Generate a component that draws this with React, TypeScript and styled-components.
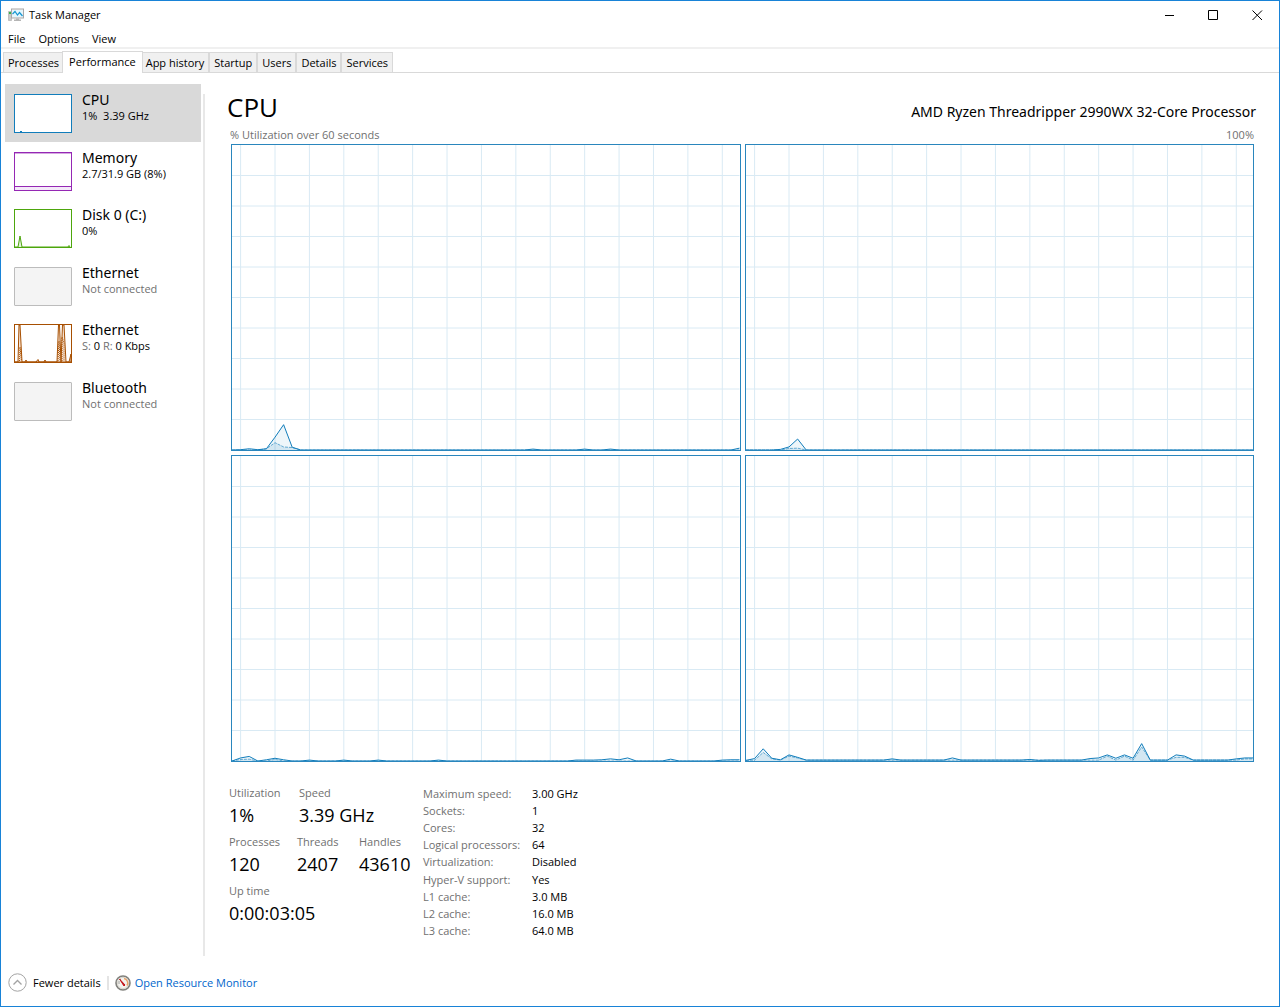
import React, { useState } from 'react';
import styled, { createGlobalStyle } from 'styled-components';

const GlobalStyle = createGlobalStyle`
  *, *::before, *::after { box-sizing: border-box; }
  body { margin: 0; background: #fff; }
  button { font: inherit; color: inherit; background: none; border: 0; padding: 0; margin: 0; text-align: left; }
  h1, h2, p, dl, dd, dt, ul { margin: 0; padding: 0; font-weight: 400; }
`;

const Window = styled.div`
  display: flex;
  flex-direction: column;
  min-height: 100vh;
  border: 1px solid #1883d7;
  background: #fff;
  color: #000;
  font-family: 'Open Sans', 'Noto Sans', sans-serif;
  font-size: 11px;
  line-height: 16px;
`;

const TitleBar = styled.header`
  display: flex;
  align-items: center;
  height: 28px;
  padding-left: 7px;
  gap: 5px;
`;

const WindowTitle = styled.h1`
  flex: 1;
  font-size: 11px;
  line-height: 16px;
`;

const WindowControls = styled.div`
  display: flex;
`;

const WindowButton = styled.button`
  display: flex;
  align-items: center;
  justify-content: center;
  width: 44px;
  height: 28px;
`;

const MenuBar = styled.nav`
  display: flex;
  align-items: center;
  gap: 13px;
  height: 20px;
  padding: 1px 7px 0;
  border-bottom: 2px solid #f0f0f0;
`;

const TabStrip = styled.div`
  display: flex;
  align-items: flex-end;
  height: 24px;
  padding-left: 2px;
  border-bottom: 1px solid #d9d9d9;
`;

const Tab = styled.button<{ $active: boolean }>`
  z-index: ${(p) => (p.$active ? 1 : 0)};
  height: ${(p) => (p.$active ? 22 : 20)}px;
  padding: 0 ${(p) => (p.$active ? 6 : 4)}px ${(p) => (p.$active ? 1 : 0)}px;
  margin: ${(p) => (p.$active ? '0 -2px -1px' : '0')};
  border: 1px solid #d9d9d9;
  border-bottom: 0;
  background: ${(p) => (p.$active ? '#fff' : '#f0f0f0')};
  & + & {
    border-left-width: ${(p) => (p.$active ? 1 : 0)}px;
  }
`;

const Body = styled.div`
  display: flex;
  flex: 1;
  padding-top: 11px;
`;

const Sidebar = styled.nav`
  width: 200px;
  padding-left: 4px;
`;

const DeviceList = styled.ul`
  display: grid;
  grid-template-rows: repeat(6, 1fr);
  height: 345px;
  list-style: none;
`;

const Device = styled.button<{ $selected: boolean }>`
  display: flex;
  align-items: flex-start;
  gap: 10px;
  width: 100%;
  height: 100%;
  padding: 8px 9px;
  background: ${(p) => (p.$selected ? '#d9d9d9' : 'transparent')};
`;

const Thumb = styled.span<{ $color: string; $fill: string }>`
  display: block;
  width: 58px;
  height: 39px;
  margin-top: 2px;
  border: 1px solid ${(p) => p.$color};
  border-radius: ${(p) => (p.$color === '#bcbcbc' ? 1 : 0)}px;
  background: ${(p) => p.$fill};
  svg { display: block; width: 100%; height: 100%; }
`;

const DeviceText = styled.span`
  display: block;
`;

const DeviceName = styled.span`
  display: block;
  font-family: 'Noto Sans', sans-serif;
  font-size: 14px;
  line-height: 16px;
`;

const DeviceInfo = styled.span<{ $muted?: boolean }>`
  display: block;
  white-space: pre;
  color: ${(p) => (p.$muted ? '#707070' : '#000')};
`;

const Muted = styled.span`
  color: #707070;
`;

const Main = styled.main`
  display: flex;
  flex: 1;
  flex-direction: column;
  margin: 10px 0 0 2px;
  padding: 0 23px 0 22px;
  border-left: 2px solid #e8e8e8;
`;

const Heading = styled.div`
  display: flex;
  align-items: baseline;
  justify-content: space-between;
  height: 33px;
`;

const ResourceName = styled.h2`
  font-size: 26px;
  line-height: 26px;
`;

const ModelName = styled.p`
  font-family: 'Noto Sans', sans-serif;
  font-size: 14px;
  line-height: 20px;
`;

const ChartLabels = styled.div`
  display: flex;
  justify-content: space-between;
  padding: 0 2px 0 3px;
  height: 17px;
  color: #707070;
`;

const ChartGrid = styled.div`
  display: grid;
  flex: 1;
  grid-template-columns: 1fr 1fr;
  grid-template-rows: 1fr 1fr;
  gap: 4px;
  padding: 0 2px 0 4px;
`;

const ChartBox = styled.div`
  contain: size;
  min-height: 120px;
  border: 1px solid #2a86bd;
  svg { display: block; width: 100%; height: 100%; }
`;

const Stats = styled.section`
  display: flex;
  height: 194px;
  padding: 23px 0 0 2px;
`;

const Counters = styled.div`
  display: flex;
  flex-direction: column;
  width: 194px;
`;

const CounterRow = styled.dl<{ $columns: string }>`
  display: grid;
  grid-template-columns: ${(p) => p.$columns};
  height: 49px;
`;

const Counter = styled.div`
  dt { color: #707070; line-height: 16px; }
  dd { font-size: 18px; line-height: 28px; white-space: nowrap; }
`;

const Details = styled.table`
  height: 155px;
  border-collapse: collapse;
  align-self: flex-start;
  th { width: 109px; padding: 0; font-weight: 400; text-align: left; color: #707070; white-space: nowrap; }
  td { padding: 0; white-space: nowrap; }
`;

const Footer = styled.footer`
  display: flex;
  align-items: center;
  height: 50px;
  padding: 3px 7px 0;
`;

const FooterButton = styled.button`
  display: flex;
  align-items: center;
  gap: 6px;
`;

const FooterLink = styled.a`
  display: flex;
  align-items: center;
  gap: 4px;
  color: #0066cc;
  text-decoration: none;
`;

const Separator = styled.span`
  width: 2px;
  height: 14px;
  margin: 0 6px;
  background: #e4e4e4;
`;

type Points = Record<number, number>;

// Samples are one per second; seconds that are not listed stay at the base level.
function toLine(points: Points, base: number) {
  return Array.from({ length: 60 }, (_, i) => `${i},${100 - (points[i] ?? base)}`).join(' ');
}

function Chart({ total, kernel, base = 0, label }: { total: Points; kernel: Points; base?: number; label: string }) {
  const totalLine = toLine(total, base);
  const kernelLine = toLine(kernel, base);
  return (
    <ChartBox>
      <svg viewBox="0 0 59 100" preserveAspectRatio="none" role="img" aria-label={label}>
        <g stroke="#d9eaf4" strokeWidth="1">
          {Array.from({ length: 15 }, (_, i) => (
            <line key={`v${i}`} x1={1 + i * 4} x2={1 + i * 4} y1="0" y2="100" vectorEffect="non-scaling-stroke" />
          ))}
          {Array.from({ length: 9 }, (_, i) => (
            <line key={`h${i}`} x1="0" x2="59" y1={10 + i * 10} y2={10 + i * 10} vectorEffect="non-scaling-stroke" />
          ))}
        </g>
        <polygon points={`0,100 ${totalLine} 59,100`} fill="#117dbb" fillOpacity="0.07" />
        <polygon points={`0,100 ${kernelLine} 59,100`} fill="#117dbb" fillOpacity="0.12" />
        <polyline points={kernelLine} fill="none" stroke="#117dbb" strokeOpacity="0.6" strokeDasharray="3 1" vectorEffect="non-scaling-stroke" />
        <polyline points={totalLine} fill="none" stroke="#117dbb" vectorEffect="non-scaling-stroke" />
      </svg>
    </ChartBox>
  );
}

const charts = [
  {
    total: { 1: 0.1, 2: 0.4, 3: 0.1, 4: 0.4, 5: 4.2, 6: 8.3, 7: 0.9, 35: 0.3, 41: 0.3, 44: 0.3, 59: 0.6 },
    kernel: { 4: 0.4, 5: 2.4, 6: 1, 7: 0.8 },
  },
  { total: { 4: 0.2, 5: 1, 6: 3.6 }, kernel: { 5: 0.5, 6: 0.6 } },
  {
    total: {
      1: 1, 2: 1.5, 4: 0.4, 5: 0.9, 6: 0.4, 9: 0.3, 13: 0.3, 17: 0.3, 24: 0.3, 40: 0.3, 41: 0.3, 42: 0.3, 43: 0.4,
      44: 0.7, 45: 0.4, 46: 1, 51: 0.6, 57: 0.3, 58: 0.4, 59: 0.4,
    },
    kernel: { 1: 0.5, 2: 0.6, 5: 0.5 },
  },
  {
    base: 0.3,
    total: {
      0: 0.2, 1: 0.8, 2: 4, 3: 0.9, 4: 0.4, 5: 2, 6: 1.2, 17: 0.7, 24: 1, 33: 0.5, 34: 0.2, 40: 0.8, 41: 1,
      42: 2, 43: 0.9, 44: 2, 45: 0.9, 46: 5.7, 50: 2, 51: 1.6, 57: 0.7, 58: 1, 59: 1,
    },
    kernel: { 0: 0.2, 2: 2.8, 3: 0.7, 5: 1.6, 6: 1, 42: 1.6, 44: 1.6, 46: 4.6, 50: 1.2, 51: 1.2, 58: 0.7, 59: 0.7 },
  },
];

const CpuThumb = () => (
  <svg viewBox="0 0 56 37"><path d="M5 37L6 36L7 37" fill="none" stroke="#117dbb" /></svg>
);

const MemoryThumb = () => (
  <svg viewBox="0 0 56 37">
    <rect y="34" width="56" height="3" fill="#f4e9f9" />
    <path d="M0 .5H56" stroke="#9528b4" strokeOpacity=".4" />
    <path d="M0 33.500H56" stroke="#9528b4" />
  </svg>
);

const DiskThumb = () => (
  <svg viewBox="0 0 56 37" fill="#e3f2d8" stroke="#4da60c">
    <path d="M0 37H3L5 26L7 37H53L54 35.500L55 37" />
  </svg>
);

const NetworkThumb = () => (
  <svg viewBox="0 0 56 37" fill="#f6e4d5" stroke="#a74f01">
    <path d="M0 37H3L4 0H5L7 37H10L11 35L12 37H21L23 34.500L24 37H29L30 35L31 37H42L43.500 0H44.500L46 37L47.500 0H49L51 37H54L56 29V37Z" />
    <path d="M4.500 36L5 22L6.500 36M43 36L44 16L45 36M47 36V12L49 18V36" fill="none" strokeDasharray="1 1" />
  </svg>
);

const devices = [
  { name: 'CPU', info: '1%  3.39 GHz', color: '#117dbb', fill: '#fff', Graph: CpuThumb },
  { name: 'Memory', info: '2.7/31.9 GB (8%)', color: '#9528b4', fill: '#fff', Graph: MemoryThumb },
  { name: 'Disk 0 (C:)', info: '0%', color: '#4da60c', fill: '#fff', Graph: DiskThumb },
  { name: 'Ethernet', info: 'Not connected', muted: true, color: '#bcbcbc', fill: '#f4f4f4' },
  {
    name: 'Ethernet',
    info: (
      <>
        <Muted>S:</Muted> 0 <Muted>R:</Muted> 0 Kbps
      </>
    ),
    color: '#a74f01',
    fill: '#fff',
    Graph: NetworkThumb,
  },
  { name: 'Bluetooth', info: 'Not connected', muted: true, color: '#bcbcbc', fill: '#f4f4f4' },
];

const tabs = ['Processes', 'Performance', 'App history', 'Startup', 'Users', 'Details', 'Services'];

const counterRows = [
  { columns: '70px 1fr', items: [['Utilization', '1%'], ['Speed', '3.39 GHz']] },
  { columns: '68px 62px 1fr', items: [['Processes', '120'], ['Threads', '2407'], ['Handles', '43610']] },
  { columns: '1fr', items: [['Up time', '0:00:03:05']] },
];

const details = [
  ['Maximum speed:', '3.00 GHz'],
  ['Sockets:', '1'],
  ['Cores:', '32'],
  ['Logical processors:', '64'],
  ['Virtualization:', 'Disabled'],
  ['Hyper-V support:', 'Yes'],
  ['L1 cache:', '3.0 MB'],
  ['L2 cache:', '16.0 MB'],
  ['L3 cache:', '64.0 MB'],
];

const AppIcon = () => (
  <svg width="16" height="16" viewBox="0 0 16 16" aria-hidden="true">
    <path d="M.5 4.500H3.500V13.500H.5Z" fill="#c9c9c9" stroke="#a8a8a8" strokeWidth=".6" />
    <rect x="1" y="5" width="2" height="2" fill="#37b34a" />
    <rect x="3.500" y="2" width="12" height="9" fill="#f2f2f2" stroke="#a8a8a8" />
    <rect x="4.500" y="3" width="10" height="7" fill="#e3f6fd" />
    <path d="M4.500 7L7 4.500L9.500 8L11.500 5.500L14.500 9" fill="none" stroke="#1596d1" strokeWidth="1.200" />
    <path d="M8 11.500H11V12.500H13V14H6V12.500H8Z" fill="#b5b5b5" />
  </svg>
);

const GaugeIcon = () => (
  <svg width="16" height="16" viewBox="0 0 16 16" aria-hidden="true">
    <circle cx="8" cy="8" r="7" fill="#f4f3ef" stroke="#80807c" strokeWidth="1.600" />
    <circle cx="8" cy="8" r="5.600" fill="none" stroke="#d2d0c8" strokeWidth=".8" />
    <path d="M9 3.500A4.600 4.600 0 0 1 12 10.500" fill="none" stroke="#e9a36c" strokeWidth="1.400" />
    <path d="M4 9V6M5 4.500L6 4" stroke="#8d8d8d" strokeWidth=".8" />
    <path d="M4.500 4L10 10L9 11Z" fill="#c4161c" stroke="#c4161c" />
  </svg>
);

export default function App() {
  const [activeTab, setActiveTab] = useState('Performance');
  const [selected, setSelected] = useState(0);

  return (
    <Window>
      <GlobalStyle />
      <TitleBar>
        <AppIcon />
        <WindowTitle>Task Manager</WindowTitle>
        <WindowControls>
          <WindowButton aria-label="Minimize">
            <svg width="11" height="11"><path d="M1 5.500H10" stroke="#000" /></svg>
          </WindowButton>
          <WindowButton aria-label="Maximize">
            <svg width="11" height="11"><path d="M.5.5H9.500V9.500H.5Z" fill="none" stroke="#000" /></svg>
          </WindowButton>
          <WindowButton aria-label="Close">
            <svg width="11" height="11"><path d="M.5.5L10 10M10 .5L.5 10" stroke="#000" /></svg>
          </WindowButton>
        </WindowControls>
      </TitleBar>

      <MenuBar>
        <button>File</button>
        <button>Options</button>
        <button>View</button>
      </MenuBar>

      <TabStrip role="tablist">
        {tabs.map((name) => (
          <Tab key={name} role="tab" aria-selected={name === activeTab} $active={name === activeTab} onClick={() => setActiveTab(name)}>
            {name}
          </Tab>
        ))}
      </TabStrip>

      <Body>
        <Sidebar aria-label="Resources">
          <DeviceList>
            {devices.map(({ name, info, muted, color, fill, Graph }, i) => (
              <li key={i}>
                <Device $selected={i === selected} onClick={() => setSelected(i)}>
                  <Thumb $color={color} $fill={fill}>{Graph && <Graph />}</Thumb>
                  <DeviceText>
                    <DeviceName>{name}</DeviceName>
                    <DeviceInfo $muted={muted}>{info}</DeviceInfo>
                  </DeviceText>
                </Device>
              </li>
            ))}
          </DeviceList>
        </Sidebar>

        <Main>
          <Heading>
            <ResourceName>CPU</ResourceName>
            <ModelName>AMD Ryzen Threadripper 2990WX 32-Core Processor</ModelName>
          </Heading>
          <ChartLabels>
            <span>% Utilization over 60 seconds</span>
            <span>100%</span>
          </ChartLabels>
          <ChartGrid>
            {charts.map((chart, i) => (
              <Chart key={i} label={`NUMA node ${i}`} {...chart} />
            ))}
          </ChartGrid>
          <Stats>
            <Counters>
              {counterRows.map(({ columns, items }) => (
                <CounterRow key={items[0][0]} $columns={columns}>
                  {items.map(([label, value]) => (
                    <Counter key={label}>
                      <dt>{label}</dt>
                      <dd>{value}</dd>
                    </Counter>
                  ))}
                </CounterRow>
              ))}
            </Counters>
            <Details>
              <tbody>
                {details.map(([label, value]) => (
                  <tr key={label}>
                    <th scope="row">{label}</th>
                    <td>{value}</td>
                  </tr>
                ))}
              </tbody>
            </Details>
          </Stats>
        </Main>
      </Body>

      <Footer>
        <FooterButton>
          <svg width="19" height="19" viewBox="0 0 19 19" fill="none" aria-hidden="true">
            <circle cx="9.500" cy="9.500" r="8.700" stroke="#a3a3a3" />
            <path d="M5.500 11.500L9.500 7.500L13.500 11.500" stroke="#a3a3a3" strokeWidth="1.300" />
          </svg>
          Fewer details
        </FooterButton>
        <Separator />
        <FooterLink href="#resource-monitor">
          <GaugeIcon />
          Open Resource Monitor
        </FooterLink>
      </Footer>
    </Window>
  );
}
